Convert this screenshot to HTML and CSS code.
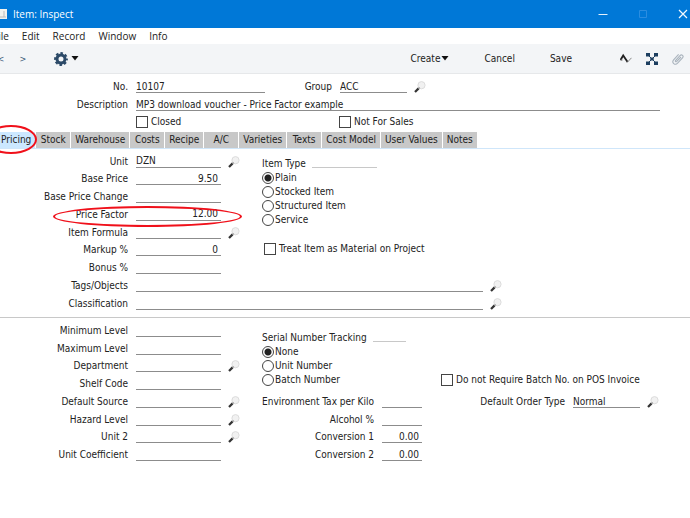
FILE: index.html
```
<!DOCTYPE html>
<html lang="en">
<head>
	<meta charset="utf-8">
	<title>Item: Inspect</title>
	<link rel="stylesheet" href="styles.css">
</head>
<body>
<svg class="symbols" aria-hidden="true">
	<symbol id="lens" viewBox="0 0 12 12">
		<circle cx="7.5" cy="4.2" r="3.6" fill="#f1f1f1" stroke="#dcdcdc"/>
		<path d="M1 11 L4.6 7.4" stroke="#333" stroke-width="2.2"/>
		<path d="M4.6 7.4 L5.6 6.4" stroke="#999" stroke-width="1.4"/>
	</symbol>
	<symbol id="caret" viewBox="0 0 8 5">
		<path d="M0.5 0 H7.5 L4 4.5Z" fill="#111"/>
	</symbol>
</svg>

<header class="titlebar">
	<svg class="app-icon" viewBox="0 0 12 10"><path d="M0 0H12V10H0Z" fill="#f3f3ee"/><path d="M1 8H11M9 2V8" stroke="#bbb"/></svg>
	<h1>Item: Inspect</h1>
	<div class="window-buttons">
		<button type="button" aria-label="Minimize"><svg viewBox="0 0 10 10"><path d="M0.5 5.5H9.5" stroke="#e4f0fb"/></svg></button>
		<button type="button" aria-label="Maximize" disabled><svg viewBox="0 0 10 10"><path d="M1.5 1.5H8.5V8.5H1.5Z" fill="none" stroke="#2b8de0"/></svg></button>
		<button type="button" aria-label="Close"><svg viewBox="0 0 10 10"><path d="M1 1L9 9M9 1L1 9" stroke="#f4f9fe" stroke-width="1.2"/></svg></button>
	</div>
</header>

<nav class="menu">
	<button type="button">File</button>
	<button type="button">Edit</button>
	<button type="button">Record</button>
	<button type="button">Window</button>
	<button type="button">Info</button>
</nav>

<div class="toolbar">
	<button type="button" class="step">&lt;</button>
	<button type="button" class="step">&gt;</button>
	<button type="button" class="gear" aria-label="Operations">
		<svg class="gear-icon" viewBox="0 0 14 14"><circle cx="7" cy="7" r="4" fill="none" stroke="#2c4a68" stroke-width="3"/><circle cx="7" cy="7" r="5.9" fill="none" stroke="#2c4a68" stroke-width="2" stroke-dasharray="2.6 2.034" stroke-dashoffset="1.3"/></svg>
		<svg class="caret"><use href="#caret"/></svg>
	</button>
	<div class="actions">
		<button type="button">Create<svg class="caret"><use href="#caret"/></svg></button>
		<button type="button">Cancel</button>
		<button type="button">Save</button>
	</div>
	<div class="tools">
		<button type="button" aria-label="Activities"><svg viewBox="0 0 12 12"><path d="M0.5 7L3.2 2.5L7.6 9" fill="none" stroke="#222" stroke-width="1.8"/><path d="M7.2 9.4L11.5 4.8" stroke="#888"/><path d="M0.5 7H2.5" stroke="#777"/></svg></button>
		<button type="button" aria-label="Workflow"><svg viewBox="0 0 12 12" fill="#1d3f60"><path d="M0 0H4V3.6H0ZM8 0H12V3.6H8ZM0 8.4H4V12H0ZM8 8.4H12V12H8ZM4.3 4.4H7.7V7.6H4.3Z"/><path d="M2 2L10 10M10 2L2 10" stroke="#1d3f60"/></svg></button>
		<button type="button" aria-label="Attachments"><svg viewBox="0 0 12 12" fill="none" stroke="#a9b3bd" stroke-width="1.1"><path d="M9 4L4.8 8.4C3.8 9.3 2.8 8.3 3.7 7.3L8 2.6C9.7 0.8 12.2 3 10.5 4.9L5.6 10.2C3 12.8 -0.7 9.7 1.6 6.9L6.6 1.4"/></svg></button>
	</div>
</div>

<form>
	<div class="record">
		<div class="row">
			<label for="no">No.</label>
			<input class="number" id="no" type="text" value="10107">
			<label class="group-label" for="group">Group</label>
			<input class="short" id="group" type="text" value="ACC">
			<button type="button" class="lookup" aria-label="Find group"><svg><use href="#lens"/></svg></button>
		</div>
		<div class="row">
			<label for="description">Description</label>
			<input class="description" id="description" type="text" value="MP3 download voucher - Price Factor example">
		</div>
		<div class="flags">
			<label class="option"><input type="checkbox">Closed</label>
			<label class="option"><input type="checkbox">Not For Sales</label>
		</div>
	</div>

	<div class="tabs">
		<button type="button" class="current">Pricing<span class="ring"></span></button>
		<button type="button">Stock</button>
		<button type="button">Warehouse</button>
		<button type="button">Costs</button>
		<button type="button">Recipe</button>
		<button type="button">A/C</button>
		<button type="button">Varieties</button>
		<button type="button">Texts</button>
		<button type="button">Cost Model</button>
		<button type="button">User Values</button>
		<button type="button">Notes</button>
	</div>

	<section class="pricing">
		<div class="fields seven">
			<div class="row"><label for="unit">Unit</label><input id="unit" type="text" value="DZN"><button type="button" class="lookup" aria-label="Find unit"><svg><use href="#lens"/></svg></button></div>
			<div class="row"><label for="base">Base Price</label><input class="amount" id="base" type="text" value="9.50"></div>
			<div class="row"><label for="change">Base Price Change</label><input class="amount" id="change" type="text"></div>
			<div class="row marked"><label for="factor">Price Factor</label><input class="amount" id="factor" type="text" value="12.00"><span class="ring"></span></div>
			<div class="row"><label for="formula">Item Formula</label><input id="formula" type="text"><button type="button" class="lookup" aria-label="Find formula"><svg><use href="#lens"/></svg></button></div>
			<div class="row"><label for="markup">Markup %</label><input class="amount" id="markup" type="text" value="0"></div>
			<div class="row"><label for="bonus">Bonus %</label><input class="amount" id="bonus" type="text"></div>
		</div>
		<div class="choices">
			<fieldset>
				<legend>Item Type</legend>
				<label class="option"><input type="radio" name="type" checked>Plain</label>
				<label class="option"><input type="radio" name="type">Stocked Item</label>
				<label class="option"><input type="radio" name="type">Structured Item</label>
				<label class="option"><input type="radio" name="type">Service</label>
			</fieldset>
			<label class="option material"><input type="checkbox">Treat Item as Material on Project</label>
		</div>
		<div class="fields two">
			<div class="row"><label for="tags">Tags/Objects</label><input class="long" id="tags" type="text"><button type="button" class="lookup" aria-label="Find tags"><svg><use href="#lens"/></svg></button></div>
			<div class="row"><label for="class">Classification</label><input class="long" id="class" type="text"><button type="button" class="lookup" aria-label="Find classification"><svg><use href="#lens"/></svg></button></div>
		</div>
	</section>

	<section class="stock">
		<div class="fields eight">
			<div class="row"><label for="min">Minimum Level</label><input id="min" type="text"></div>
			<div class="row"><label for="max">Maximum Level</label><input id="max" type="text"></div>
			<div class="row"><label for="department">Department</label><input id="department" type="text"><button type="button" class="lookup" aria-label="Find department"><svg><use href="#lens"/></svg></button></div>
			<div class="row"><label for="shelf">Shelf Code</label><input id="shelf" type="text"></div>
			<div class="row"><label for="source">Default Source</label><input id="source" type="text"><button type="button" class="lookup" aria-label="Find source"><svg><use href="#lens"/></svg></button></div>
			<div class="row"><label for="hazard">Hazard Level</label><input id="hazard" type="text"><button type="button" class="lookup" aria-label="Find hazard level"><svg><use href="#lens"/></svg></button></div>
			<div class="row"><label for="unit2">Unit 2</label><input id="unit2" type="text"><button type="button" class="lookup" aria-label="Find second unit"><svg><use href="#lens"/></svg></button></div>
			<div class="row"><label for="coefficient">Unit Coefficient</label><input id="coefficient" type="text"></div>
		</div>
		<div class="details">
			<fieldset>
				<legend>Serial Number Tracking</legend>
				<label class="option"><input type="radio" name="serial" checked>None</label>
				<label class="option"><input type="radio" name="serial">Unit Number</label>
				<label class="option"><input type="radio" name="serial">Batch Number</label>
			</fieldset>
			<label class="option batch"><input type="checkbox">Do not Require Batch No. on POS Invoice</label>
			<div class="fields four">
				<div class="row"><label for="tax">Environment Tax per Kilo</label><input class="amount" id="tax" type="text"></div>
				<div class="row"><label for="alcohol">Alcohol %</label><input class="amount" id="alcohol" type="text"></div>
				<div class="row"><label for="conv1">Conversion 1</label><input class="amount" id="conv1" type="text" value="0.00"></div>
				<div class="row"><label for="conv2">Conversion 2</label><input class="amount" id="conv2" type="text" value="0.00"></div>
			</div>
			<div class="row order">
				<label for="order">Default Order Type</label>
				<input class="short" id="order" type="text" value="Normal">
				<button type="button" class="lookup" aria-label="Find order type"><svg><use href="#lens"/></svg></button>
			</div>
		</div>
	</section>
</form>
</body>
</html>
```
FILE: styles.css
```
* {
	box-sizing: border-box;
}
body {
	margin: 0;
	background: #fff;
	color: #222;
	font: 10px/12px "DejaVu Sans Condensed", "DejaVu Sans", sans-serif;
	overflow-x: hidden;
}
button {
	padding: 0;
	border: 0;
	background: none;
	color: inherit;
	font: inherit;
	white-space: nowrap;
}
svg {
	display: block;
}
.symbols {
	position: absolute;
	width: 0;
	height: 0;
}

/* title bar */
.titlebar {
	display: flex;
	align-items: center;
	height: 28px;
	background: #0078d7;
	color: #fff;
}
.app-icon {
	width: 12px;
	height: 10px;
	margin: 0 6px 0 -5px;
}
h1 {
	margin: 0;
	font: 10px/14px "Open Sans", sans-serif;
}
.window-buttons {
	display: flex;
	gap: 30px;
	margin: 0 2px 0 auto;
}
.window-buttons svg {
	width: 10px;
	height: 10px;
}

/* menu and toolbar */
.menu {
	display: flex;
	gap: 13px;
	height: 16px;
	margin-left: -7px;
	font: 10px/16px "Open Sans", sans-serif;
}
.toolbar {
	display: flex;
	align-items: center;
	height: 30px;
	padding-right: 6px;
	border-bottom: 1px solid #e6e8ea;
	background: #f3f5f7;
}
.step {
	width: 22px;
	color: #3c5a78;
	font-size: 9px;
}
.step:first-child {
	margin-left: -10px;
}
.gear {
	display: flex;
	align-items: center;
	gap: 3px;
	margin-left: 20px;
}
.gear-icon {
	width: 14px;
	height: 14px;
}
.caret {
	display: inline-block;
	width: 8px;
	height: 5px;
	vertical-align: middle;
}
.actions {
	display: flex;
	gap: 35px;
	margin-left: auto;
}
.actions .caret {
	margin-left: 1px;
}
.tools {
	display: flex;
	gap: 14px;
	margin-left: 48px;
}
.tools svg {
	width: 12px;
	height: 12px;
}

/* fields */
.row {
	display: flex;
	align-items: flex-end;
	position: relative;
}
.row label {
	width: 128px;
	margin-right: 8px;
	text-align: right;
	white-space: nowrap;
}
.row input {
	width: 85px;
	height: 13px;
	padding: 0;
	border: 0;
	border-bottom: 1px solid #8c8c8c;
	border-radius: 0;
	background: none;
	color: inherit;
	font: inherit;
}
.row .amount {
	padding-right: 3px;
	text-align: right;
}
.row .number {
	width: 129px;
}
.row .short {
	width: 67px;
}
.row .long {
	width: 347px;
}
.row .description {
	width: 524px;
}
.row .group-label {
	width: 67px;
}
.lookup {
	margin-left: 7px;
}
.lookup svg {
	width: 12px;
	height: 12px;
}
.option {
	display: flex;
	align-items: center;
	gap: 3px;
	white-space: nowrap;
}
.option input {
	appearance: none;
	width: 12px;
	height: 12px;
	margin: 0;
	border: 1px solid #444;
	background: #fff;
}
.option input[type=radio] {
	border-radius: 50%;
}
.option input[type=radio]:checked {
	background: radial-gradient(circle, #222 3px, #fff 4px);
}
.record {
	height: 58px;
	padding-top: 1px;
}
.record .row {
	height: 18px;
}
.flags {
	display: grid;
	grid-template-columns: 203px 1fr;
	margin: 5px 0 0 136px;
}

/* tabs */
.tabs {
	display: flex;
	gap: 1px;
	height: 17px;
	border-bottom: 1px solid #cfe6fa;
}
.tabs button {
	min-width: 34px;
	padding: 0 4px;
	background: #c8c8c8;
}
.tabs .current {
	position: relative;
	margin-left: -3px;
	background: #cce8ff;
}
.ring {
	position: absolute;
	border: 2px solid #f0101a;
	border-radius: 50%;
	pointer-events: none;
}
.current .ring {
	inset: -7px -2px -6px -12px;
	z-index: 1;
}
.marked .ring {
	top: 3px;
	left: 53px;
	width: 189px;
	height: 21px;
}

/* sections */
section {
	display: grid;
	grid-template-columns: 262px 1fr;
}
.fields {
	display: grid;
	grid-auto-rows: 1fr;
}
.pricing {
	padding: 1px 0 7px;
	border-bottom: 1px solid #c8c8c8;
}
.seven {
	height: 124px;
}
.two {
	grid-column: 1 / -1;
	height: 36px;
}
.eight {
	height: 142px;
}
fieldset {
	margin: 0;
	padding: 0;
	border: 0;
}
legend {
	display: flex;
	align-items: flex-end;
	gap: 6px;
	padding: 0;
	line-height: 14px;
}
legend::after {
	content: "";
	width: 33px;
	height: 3px;
	margin-bottom: 3px;
	border-bottom: 1px solid #c8c8c8;
}
.choices legend::after {
	width: 65px;
}
fieldset .option {
	height: 14px;
	gap: 1px;
}
.choices {
	padding-top: 7px;
}
.material {
	margin: 16px 0 0 2px;
}
.stock {
	padding-top: 1px;
}
.details {
	display: grid;
	grid-template-columns: 160px 1fr;
	grid-template-rows: 71px 71px;
	column-gap: 19px;
}
.details fieldset {
	margin-top: 12px;
}
.batch {
	align-self: end;
	margin-bottom: 4px;
}
.four .row label {
	width: 112px;
}
.four .row input {
	width: 40px;
}
.order {
	height: 18px;
}
.order label {
	width: 124px;
}
```
